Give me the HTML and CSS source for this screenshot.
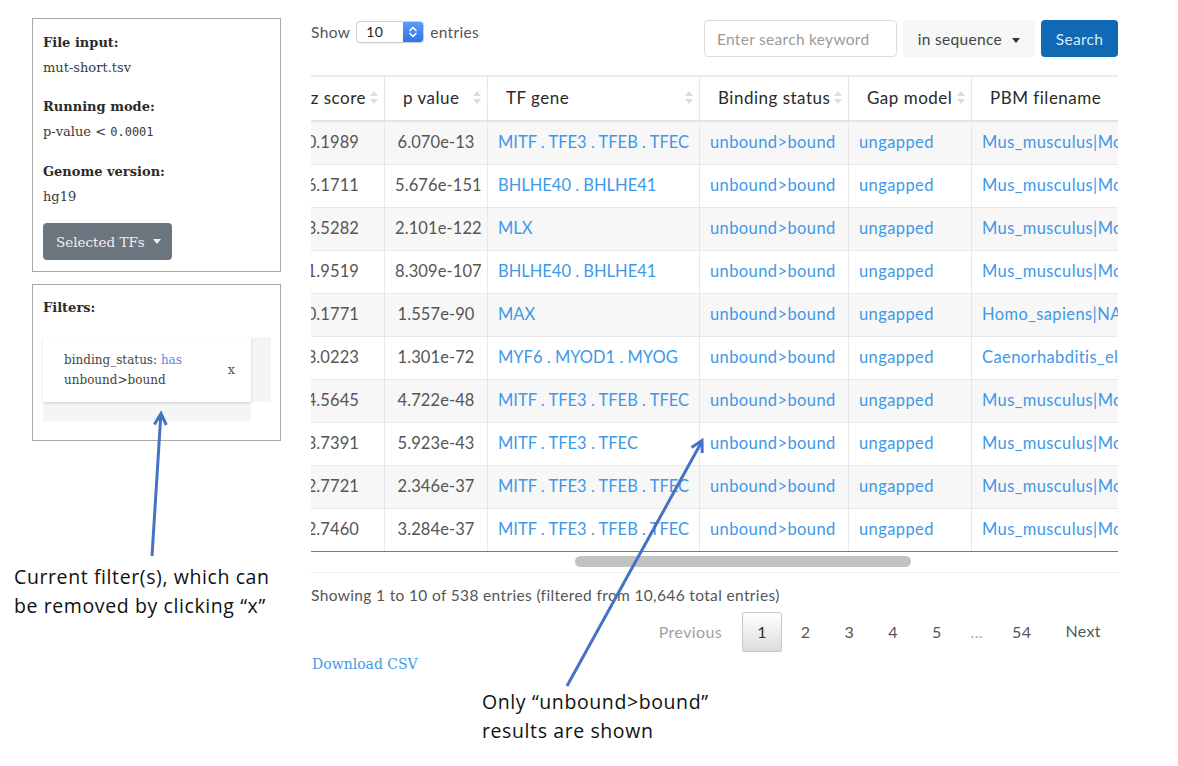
FILE: index.html
```html
<!DOCTYPE html>
<html>
<head>
<meta charset="utf-8">
<link rel="stylesheet" href="styles.css">
</head>
<body>
<div class="page">
  <aside class="side">
    <div class="box info-box">
      <div class="field">
        <div class="label">File input:</div>
        <div class="value">mut-short.tsv</div>
      </div>
      <div class="field">
        <div class="label">Running mode:</div>
        <div class="value">p-value &lt; <span class="mono">0.0001</span></div>
      </div>
      <div class="field">
        <div class="label">Genome version:</div>
        <div class="value">hg19</div>
      </div>
      <button class="tf-btn">Selected TFs <span class="caret"></span></button>
    </div>
    <div class="box filter-box">
      <div class="label">Filters:</div>
      <div class="filter-scroll">
        <div class="filter-card">
          <div class="filter-text">binding_status: <span class="has">has</span><br>unbound&gt;bound</div>
          <span class="filter-x">x</span>
        </div>
        <div class="vtrack"></div>
        <div class="htrack"></div>
        <div class="corner"></div>
      </div>
    </div>
  </aside>

  <main class="main">
    <div class="topbar">
      <div class="length">
        Show
        <span class="select"><span class="select-val">10</span><span class="spin"><svg width="10" height="14" viewBox="0 0 10 14"><path d="M2 5.5 L5 2.5 L8 5.5 M2 8.5 L5 11.5 L8 8.5" fill="none" stroke="#fff" stroke-width="1.6" stroke-linecap="round" stroke-linejoin="round"/></svg></span></span>
        entries
      </div>
      <div class="search">
        <input class="search-input" type="text" placeholder="Enter search keyword">
        <button class="scope-btn">in sequence <span class="caret dark"></span></button>
        <button class="search-btn">Search</button>
      </div>
    </div>

    <div class="table-wrap">
      <table class="results">
        <colgroup>
          <col style="width:113px"><col style="width:103px"><col style="width:212px"><col style="width:149px"><col style="width:123px"><col style="width:330px">
        </colgroup>
        <thead>
          <tr>
            <th class="zcol">z score<span class="sort"></span></th>
            <th>p value<span class="sort"></span></th>
            <th>TF gene<span class="sort"></span></th>
            <th>Binding status<span class="sort"></span></th>
            <th>Gap model<span class="sort"></span></th>
            <th>PBM filename</th>
          </tr>
        </thead>
        <tbody>
          <tr><td class="c">10.1989</td><td class="c">6.070e-13</td><td class="tf"><a>MITF</a> . <a>TFE3</a> . <a>TFEB</a> . <a>TFEC</a></td><td><a>unbound&gt;bound</a></td><td><a>ungapped</a></td><td><a>Mus_musculus|Mondo_PBM|Tfe3_ungapped.txt</a></td></tr>
          <tr><td class="c">16.1711</td><td class="c">5.676e-151</td><td class="tf"><a>BHLHE40</a> . <a>BHLHE41</a></td><td><a>unbound&gt;bound</a></td><td><a>ungapped</a></td><td><a>Mus_musculus|Mondo_PBM|Bhlhe40_ungapped.txt</a></td></tr>
          <tr><td class="c">13.5282</td><td class="c">2.101e-122</td><td class="tf"><a>MLX</a></td><td><a>unbound&gt;bound</a></td><td><a>ungapped</a></td><td><a>Mus_musculus|Mondo_PBM|Mlx_ungapped.txt</a></td></tr>
          <tr><td class="c">11.9519</td><td class="c">8.309e-107</td><td class="tf"><a>BHLHE40</a> . <a>BHLHE41</a></td><td><a>unbound&gt;bound</a></td><td><a>ungapped</a></td><td><a>Mus_musculus|Mondo_PBM|Bhlhe41_ungapped.txt</a></td></tr>
          <tr><td class="c">10.1771</td><td class="c">1.557e-90</td><td class="tf"><a>MAX</a></td><td><a>unbound&gt;bound</a></td><td><a>ungapped</a></td><td><a>Homo_sapiens|NA|Max_ungapped.txt</a></td></tr>
          <tr><td class="c">18.0223</td><td class="c">1.301e-72</td><td class="tf"><a>MYF6</a> . <a>MYOD1</a> . <a>MYOG</a></td><td><a>unbound&gt;bound</a></td><td><a>ungapped</a></td><td><a>Caenorhabditis_elegans|NA|hlh-1_ungapped.txt</a></td></tr>
          <tr><td class="c">14.5645</td><td class="c">4.722e-48</td><td class="tf"><a>MITF</a> . <a>TFE3</a> . <a>TFEB</a> . <a>TFEC</a></td><td><a>unbound&gt;bound</a></td><td><a>ungapped</a></td><td><a>Mus_musculus|Mondo_PBM|Tfeb_ungapped.txt</a></td></tr>
          <tr><td class="c">13.7391</td><td class="c">5.923e-43</td><td class="tf"><a>MITF</a> . <a>TFE3</a> . <a>TFEC</a></td><td><a>unbound&gt;bound</a></td><td><a>ungapped</a></td><td><a>Mus_musculus|Mondo_PBM|Tfec_ungapped.txt</a></td></tr>
          <tr><td class="c">12.7721</td><td class="c">2.346e-37</td><td class="tf"><a>MITF</a> . <a>TFE3</a> . <a>TFEB</a> . <a>TFEC</a></td><td><a>unbound&gt;bound</a></td><td><a>ungapped</a></td><td><a>Mus_musculus|Mondo_PBM|Mitf_ungapped.txt</a></td></tr>
          <tr><td class="c">12.7460</td><td class="c">3.284e-37</td><td class="tf"><a>MITF</a> . <a>TFE3</a> . <a>TFEB</a> . <a>TFEC</a></td><td><a>unbound&gt;bound</a></td><td><a>ungapped</a></td><td><a>Mus_musculus|Mondo_PBM|Tfe3_ungapped.txt</a></td></tr>
        </tbody>
      </table>
      <div class="hscroll"><div class="thumb"></div></div>
    </div>

    <div class="table-info">Showing 1 to 10 of 538 entries (filtered from 10,646 total entries)</div>
    <div class="paginate">
      <span class="pbtn disabled">Previous</span>
      <span class="pbtn current">1</span>
      <span class="pbtn">2</span>
      <span class="pbtn">3</span>
      <span class="pbtn">4</span>
      <span class="pbtn">5</span>
      <span class="ellipsis">…</span>
      <span class="pbtn">54</span>
      <span class="pbtn next">Next</span>
    </div>
    <a class="download">Download CSV</a>
  </main>
</div>

<div class="annotations">
  <svg class="arrows" width="1178" height="766" viewBox="0 0 1178 766">
    <g fill="none" stroke="#4472c4" stroke-width="3" stroke-linejoin="miter">
      <line x1="152" y1="556" x2="160.8" y2="415"/>
      <polyline points="154.4,424.5 161,413.5 166.3,425"/>
      <line x1="567" y1="686" x2="701" y2="443"/>
      <polyline points="691.5,447.5 702,440.5 702.2,453"/>
    </g>
  </svg>
  <div class="note note-left">Current filter(s), which can<br>be removed by clicking “x”</div>
  <div class="note note-bottom">Only “unbound&gt;bound”<br>results are shown</div>
</div>
</body>
</html>
```

FILE: styles.css
```css
* { box-sizing: border-box; }

html, body {
  margin: 0;
  padding: 0;
  background: #fff;
}

body {
  width: 1178px;
  height: 766px;
  position: relative;
  overflow: hidden;
  font-family: "Lato", "Open Sans", sans-serif;
  color: #555;
}

.page {
  display: flex;
  align-items: flex-start;
}

/* ---------- side panel ---------- */
.side {
  width: 249px;
  margin-left: 32px;
  margin-top: 18px;
  display: flex;
  flex-direction: column;
  gap: 12px;
}

.box {
  border: 1.5px solid #a8a8a8;
  font-family: "DejaVu Serif", "Liberation Serif", serif;
  font-size: 13px;
  color: #333;
}

.info-box {
  height: 254px;
  padding: 11px 10px 0 10px;
}

.field {
  margin-bottom: 14px;
}

.field .label,
.filter-box .label {
  font-weight: bold;
  line-height: 25px;
  color: #2b2b2b;
}

.field .value {
  line-height: 25px;
  color: #3a3a3a;
}

.mono {
  font-family: "DejaVu Sans Mono", monospace;
  font-size: 12px;
}

.tf-btn {
  display: flex;
  align-items: center;
  gap: 8px;
  margin-top: 1px;
  height: 37px;
  width: 129px;
  padding: 0 0 0 13px;
  border: none;
  border-radius: 4px;
  background: #6c757d;
  color: #eef0f3;
  font-family: "DejaVu Serif", "Liberation Serif", serif;
  font-size: 13.5px;
}

.caret {
  display: inline-block;
  width: 0;
  height: 0;
  border-left: 4px solid transparent;
  border-right: 4px solid transparent;
  border-top: 5px solid #eef0f3;
}

.caret.dark {
  border-top-color: #333;
  margin-left: 6px;
  vertical-align: middle;
}

.filter-box {
  height: 157px;
  padding: 10px 10px 0 10px;
}

.filter-box .label {
  margin-bottom: 17px;
}

.filter-scroll {
  display: grid;
  grid-template-columns: 208px 20px;
  grid-template-rows: 65px 19px;
}

.filter-card {
  background: #fff;
  box-shadow: 0 1px 3px rgba(0, 0, 0, 0.16);
  border-radius: 2px;
  display: flex;
  align-items: center;
  justify-content: space-between;
  padding: 0 16px 0 21px;
  font-size: 12px;
  color: #444;
  position: relative;
  z-index: 1;
}

.filter-text {
  line-height: 20px;
}

.has {
  color: #4f86ec;
}

.filter-x {
  font-size: 13px;
  color: #555;
}

.vtrack, .htrack {
  background: #f5f5f5;
}

/* ---------- main ---------- */
.main {
  width: 807px;
  margin-left: 30px;
  display: flex;
  flex-direction: column;
  letter-spacing: 0.35px;
}

.topbar {
  display: flex;
  justify-content: space-between;
  align-items: flex-start;
  margin-top: 20px;
  height: 37px;
  margin-bottom: 18px;
}

.length {
  display: flex;
  align-items: center;
  gap: 6px;
  margin-top: 1px;
  font-size: 15.5px;
  color: #555;
  height: 22px;
}

.select {
  display: inline-flex;
  width: 68px;
  height: 22px;
  border: 1px solid #cfcfcf;
  border-radius: 4px;
  overflow: hidden;
  background: #fff;
  box-shadow: 0 1px 1px rgba(0,0,0,0.06);
}

.select-val {
  flex: 1;
  padding-left: 9px;
  font-size: 14px;
  line-height: 20px;
  color: #222;
}

.spin {
  width: 20px;
  background: linear-gradient(#5a9cf8, #2f76e8);
  display: flex;
  align-items: center;
  justify-content: center;
}

.search {
  display: flex;
  gap: 6px;
  height: 37px;
  letter-spacing: 0.2px;
}

.search-input {
  width: 193px;
  height: 37px;
  border: 1px solid #dcdcdc;
  border-radius: 4px;
  padding: 0 12px;
  font-family: "Lato", "Open Sans", sans-serif;
  font-size: 15.5px;
  letter-spacing: 0.3px;
  color: #333;
}

.search-input::placeholder {
  color: #9a9a9a;
}

.scope-btn {
  width: 132px;
  height: 37px;
  border: none;
  border-radius: 4px;
  background: #f6f7f8;
  color: #444;
  font-family: "Lato", "Open Sans", sans-serif;
  font-size: 15.5px;
  letter-spacing: 0.3px;
  padding: 0;
}

.search-btn {
  width: 77px;
  height: 37px;
  border: none;
  border-radius: 4px;
  background: #0f69b4;
  color: #d9e8f7;
  font-family: "Lato", "Open Sans", sans-serif;
  font-size: 15.5px;
  letter-spacing: 0.3px;
  padding: 0;
}

/* ---------- table ---------- */
.table-wrap {
  width: 807px;
  overflow: hidden;
}

.results {
  margin-left: -40px;
  border-collapse: collapse;
  table-layout: fixed;
  width: 1030px;
  font-size: 16.5px;
  letter-spacing: 0.4px;
  white-space: nowrap;
}

.results th {
  position: relative;
  height: 45px;
  padding: 0 18px 2px 18px;
  text-align: left;
  font-weight: normal;
  font-size: 17px;
  letter-spacing: 0.5px;
  color: #2a2a2a;
  border-top: 2px solid #ebebeb;
  border-bottom: 2px solid #e3e3e3;
  border-left: 1px solid #e6e6e6;
  border-right: 1px solid #e6e6e6;
  overflow: hidden;
}

.results th.zcol {
  text-align: right;
  padding-right: 18px;
}

.sort {
  position: absolute;
  right: 6px;
  top: 14px;
  width: 8px;
  height: 13px;
}

.sort::before,
.sort::after {
  content: "";
  position: absolute;
  left: 0;
  border-left: 4px solid transparent;
  border-right: 4px solid transparent;
}

.sort::before {
  top: 0;
  border-bottom: 5px solid #dcdcdc;
}

.sort::after {
  bottom: 0;
  border-top: 5px solid #dcdcdc;
}

.results td {
  height: 43px;
  padding: 0 10px 1px 10px;
  border: 1px solid #e8e8e8;
  overflow: hidden;
  color: #555;
}

.results td.c {
  text-align: center;
  letter-spacing: 0.1px;
}

.results td.tf {
  color: #3f98e8;
  letter-spacing: 0;
}

.results tbody tr:nth-child(odd) td {
  background: #f7f7f7;
}

.results tbody tr:last-child td {
  border-bottom: 1px solid #7a7a7a;
}

.results a {
  color: #3f98e8;
}

.hscroll {
  height: 21px;
  border-bottom: 1px solid #eeeeee;
  padding-top: 4px;
}

.thumb {
  margin-left: 264px;
  width: 336px;
  height: 11px;
  border-radius: 6px;
  background: #c2c2c2;
}

.table-info {
  margin-top: 11px;
  line-height: 22px;
  font-size: 15.5px;
  letter-spacing: 0.35px;
  color: #555;
}

.paginate {
  display: flex;
  justify-content: flex-end;
  align-items: center;
  gap: 4px;
  margin-top: 6px;
  height: 40px;
  font-size: 16px;
  letter-spacing: 0.4px;
}

.pbtn {
  height: 40px;
  line-height: 38px;
  padding: 0 14px;
  border: 1px solid transparent;
  border-radius: 2px;
  color: #555;
}

.pbtn.disabled {
  color: #a0a0a0;
  margin-right: 1px;
}

.pbtn.current {
  border-color: #c9c9c9;
  background: linear-gradient(#ffffff, #dcdcdc);
  color: #333;
}

.pbtn.next {
  line-height: 36px;
  padding-right: 16px;
}

.ellipsis {
  padding: 0 10px;
  color: #aaa;
  line-height: 40px;
}

.download {
  margin-top: 2px;
  margin-left: 1px;
  line-height: 20px;
  font-family: "DejaVu Serif", "Liberation Serif", serif;
  font-size: 14px;
  letter-spacing: 0;
  color: #3f98e8;
}

/* ---------- annotation overlay ---------- */
.annotations {
  position: absolute;
  left: 0;
  top: 0;
  width: 1178px;
  height: 766px;
  pointer-events: none;
}

.arrows {
  position: absolute;
  left: 0;
  top: 0;
}

.note {
  position: absolute;
  font-family: "Open Sans", "Noto Sans", sans-serif;
  font-size: 19.5px;
  line-height: 28.5px;
  letter-spacing: 0.6px;
  color: #111;
}

.note-left {
  left: 14px;
  top: 563px;
}

.note-bottom {
  left: 482px;
  top: 688px;
}
```
